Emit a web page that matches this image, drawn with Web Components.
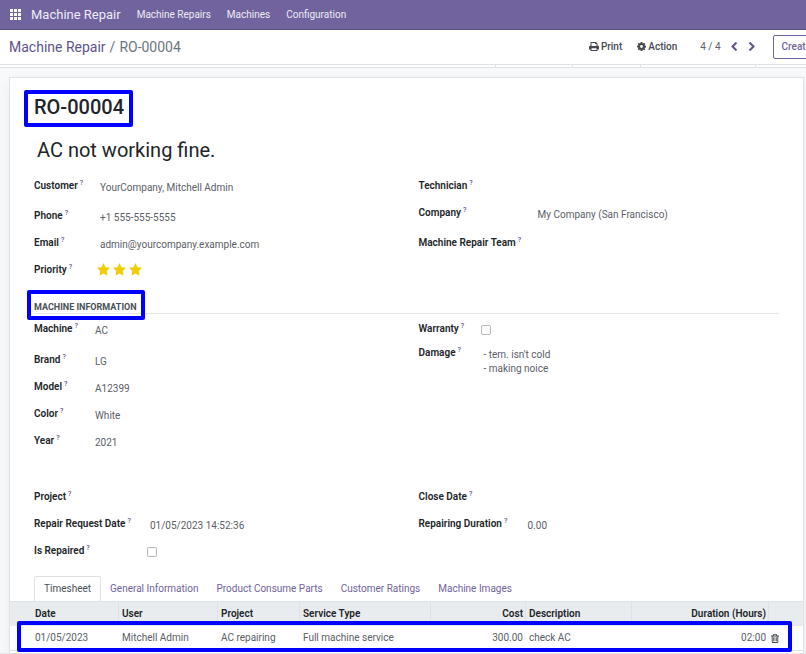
<!DOCTYPE html>
<html lang="en">
<head>
<meta charset="utf-8">
<title>RO-00004 - Machine Repair</title>
<style>
  body { margin: 0; font: 10px/14px Roboto, "Noto Sans", sans-serif; color: #5a6067; background: #f8f9fa; }
</style>
</head>
<body>
<repair-app></repair-app>

<template id="t-app">
  <style>
    :host { display: flex; flex-direction: column; min-height: 100vh; box-sizing: border-box; overflow: hidden; border-bottom: 1px solid #e3e5e8; }
    form-sheet { flex: 1; margin: 9px 2px 0 9px; }
  </style>
  <top-nav></top-nav>
  <control-panel></control-panel>
  <form-sheet></form-sheet>
</template>

<template id="t-nav">
  <style>
    :host { display: block; background: #71639e; border-bottom: 1px solid #5a4f7f; }
    nav { display: flex; align-items: center; height: 29px; padding: 0 10px; gap: 16px; }
    a { color: #eeecf5; text-decoration: none; }
    .home { display: flex; align-items: center; gap: 10px; font-size: 13px; line-height: 20px; }
    svg { display: block; }
  </style>
  <nav>
    <a class="home" href="#"><svg width="11" height="11" viewBox="0 0 11 11" fill="#fff" aria-hidden="true"><path d="M0 0h3v3H0zM4 0h3v3H4zM8 0h3v3H8zM0 4h3v3H0zM4 4h3v3H4zM8 4h3v3H8zM0 8h3v3H0zM4 8h3v3H4zM8 8h3v3H8z"/></svg>Machine Repair</a>
    <a href="#">Machine Repairs</a>
    <a href="#">Machines</a>
    <a href="#">Configuration</a>
  </nav>
</template>

<template id="t-panel">
  <style>
    :host { display: block; background: #fff; }
    .bar { display: flex; align-items: center; height: 34px; padding-left: 9px; border-bottom: 1px solid #dee2e6; overflow: hidden; }
    .crumbs { flex: 1; font-size: 14px; line-height: 20px; display: flex; gap: 4px; color: #6c757d; }
    .crumbs a { color: #5f5389; text-decoration: none; }
    button { font: inherit; background: none; border: 0; padding: 0; color: #43494f; display: flex; align-items: center; gap: 2px; font-weight: 500; }
    svg { display: block; }
    .menus { display: flex; gap: 15px; margin-right: 23px; }
    .menus svg { margin-bottom: 1px; }
    .pager { display: flex; align-items: center; gap: 10px; margin-right: 18px; }
    .pager button { padding-bottom: 2px; }
    .create { color: #71639e; border: 1px solid #71639e; border-radius: 2px; height: 24px; padding: 0 8px; margin-right: -14px; flex: none; }
    .strip { display: flex; justify-content: flex-end; height: 2px; border-bottom: 1px solid #dee2e6; }
    .strip i { border-left: 1px solid #dee2e6; box-sizing: border-box; }
  </style>
  <div class="bar">
    <div class="crumbs"><a href="#">Machine Repair</a><span>/</span><span>RO-00004</span></div>
    <div class="menus">
      <button type="button"><svg width="10" height="9" viewBox="0 0 20 18" aria-hidden="true"><path fill="#43494f" fill-rule="evenodd" d="M4 0h10l3 3v4q3 0 3 3v5h-3v3H3v-3H0v-5q0-3 3-3V0zM5 2v6h10V4h-3V2zM5 12.500V16h10v-3.500z"/></svg>Print</button>
      <button type="button"><svg width="9" height="9" viewBox="0 0 18 18" aria-hidden="true"><path fill="#43494f" fill-rule="evenodd" d="M7.300 0h3.400l.5 2.500 1 .4L14.400 1.500l2.300 2.300-1.500 2.100.5 1.100 2.300.4v3.400l-2.400.5-.4 1 1.500 2.100-2.300 2.300-2.100-1.500-1.100.5-.4 2.300H7.300l-.5-2.400-1-.4-2.200 1.500-2.300-2.300 1.500-2.100-.5-1.100L0 10.700V7.300l2.400-.5.4-1L1.300 3.700l2.300-2.300 2.100 1.500 1.100-.5zM9 6.200a2.800 2.800 0 1 0 0 5.600A2.800 2.800 0 1 0 9 6.200z"/></svg>Action</button>
    </div>
    <div class="pager">
      <span>4 / 4</span>
      <button type="button" aria-label="Previous"><svg width="7" height="9" viewBox="0 0 7 9" fill="none" stroke="#5f5389" stroke-width="2" aria-hidden="true"><path d="M5.500 .5 1.500 4.500 5.500 8.500"/></svg></button>
      <button type="button" aria-label="Next"><svg width="7" height="9" viewBox="0 0 7 9" fill="none" stroke="#5f5389" stroke-width="2" aria-hidden="true"><path d="M1.500 .5 5.500 4.500 1.500 8.500"/></svg></button>
    </div>
    <button class="create" type="button">Create</button>
  </div>
  <div class="strip"><i style="width:77px"></i><i style="width:68px"></i><i style="width:115px"></i><i style="width:51px"></i></div>
</template>

<template id="t-field">
  <style>
    :host { display: flex; min-height: 27px; }
    :host([tall]) { min-height: 30px; }
    label, .label { flex: none; width: var(--label-width, 66px); color: #212529; font-weight: 600; white-space: nowrap; }
    sup { font-size: 7px; line-height: 7px; font-weight: 500; color: #5f5389; margin-left: 2px; vertical-align: 4px; }
    .value { padding-top: 2px; min-width: 0; }
    input { appearance: none; display: block; width: 10px; height: 10px; margin: 3px 0 0 -3px; border: 1px solid #b5b8bc; border-radius: 2px; background: #fff; }
  </style>
</template>

<template id="t-stars">
  <style>
    :host { display: flex; gap: 3px; margin: -2px 0 0 -3px; }
    svg { display: block; }
  </style>
</template>

<template id="t-mark">
  <style>
    :host { display: block; box-sizing: border-box; border: 4px solid #00f; border-radius: 2px; }
  </style>
  <slot></slot>
</template>

<template id="t-sheet">
  <style>
    :host { display: block; box-sizing: border-box; background: #fff; border: 1px solid #dee2e6; border-bottom: 0; box-shadow: 0 4px 12px #0000000f; }
    .body { padding: 12px 24px 0; }
    h1, h2, h3 { margin: 0; }
    .title { width: fit-content; margin-left: -10px; padding: 1px 5px 4px 6px; }
    h1 { font-size: 20px; line-height: 24px; font-weight: 500; color: #212529; }
    h2 { font-size: 20px; line-height: 28px; font-weight: 400; color: #212529; margin: 9px 3px 15px; }
    .group { display: grid; grid-template-columns: 1fr 1fr; column-gap: 24px; }
    h3 { position: relative; margin: 10px 0 8px; padding-top: 1px; font-size: 9px; line-height: 12px; font-weight: 700; color: #495057; border-bottom: 1px solid #e5e7ea; }
    .over { position: absolute; left: -7px; top: -10px; width: 118px; height: 30px; }
    .machine { margin-bottom: 29px; }
    .a { --label-width: 66px; } .b { --label-width: 119px; }
    .c { --label-width: 61px; } .d { --label-width: 65px; }
    .e { --label-width: 116px; } .f { --label-width: 109px; }
    .c form-field[tall] { min-height: 31px; }
    .d form-field { min-height: 24px; }
    note-book { margin-top: 5px; }
  </style>
  <div class="body">
    <mark-box class="title"><h1>RO-00004</h1></mark-box>
    <h2>AC not working fine.</h2>
    <div class="group">
      <div class="a">
        <form-field label="Customer" tall>YourCompany, Mitchell Admin</form-field>
        <form-field label="Phone">+1 555-555-5555</form-field>
        <form-field label="Email">admin@yourcompany.example.com</form-field>
        <form-field label="Priority"><star-rating count="3"></star-rating></form-field>
      </div>
      <div class="b">
        <form-field label="Technician"></form-field>
        <form-field label="Company" tall>My Company (San Francisco)</form-field>
        <form-field label="Machine Repair Team"></form-field>
      </div>
    </div>
    <h3>MACHINE INFORMATION<mark-box class="over"></mark-box></h3>
    <div class="group machine">
      <div class="c">
        <form-field label="Machine" tall>AC</form-field>
        <form-field label="Brand">LG</form-field>
        <form-field label="Model">A12399</form-field>
        <form-field label="Color">White</form-field>
        <form-field label="Year">2021</form-field>
      </div>
      <div class="d">
        <form-field label="Warranty" type="check"></form-field>
        <form-field label="Damage">- tem. isn't cold<br>- making noice</form-field>
      </div>
    </div>
    <div class="group">
      <div class="e">
        <form-field label="Project"></form-field>
        <form-field label="Repair Request Date">01/05/2023 14:52:36</form-field>
        <form-field label="Is Repaired" type="check"></form-field>
      </div>
      <div class="f">
        <form-field label="Close Date"></form-field>
        <form-field label="Repairing Duration">0.00</form-field>
      </div>
    </div>
  </div>
  <note-book></note-book>
</template>

<template id="t-book">
  <style>
    :host { display: block; }
    .tabs { display: flex; padding: 0 24px; }
    .tabs button { font: inherit; height: 25px; padding: 0 8px; border: 1px solid transparent; border-bottom: 0; border-radius: 2px 2px 0 0; background: none; color: #71639e; }
    .tabs button[aria-selected=true] { padding: 0 9px; color: #495057; border-color: #dee2e6; }
    .wrap { position: relative; }
    table { width: 100%; table-layout: fixed; border-collapse: separate; border-spacing: 0; border-top: 1px solid #dee2e6; }
    th, td { padding: 0 3px; height: 24px; text-align: left; white-space: nowrap; box-sizing: border-box; }
    th { background: #e9ecef; color: #212529; font-weight: 600; border-left: 1px solid #dee2e6; }
    th:first-child { border-left-color: #e9ecef; }
    td { border-bottom: 1px solid #dee2e6; border-left: 1px solid transparent; }
    th:first-child, td:first-child { padding-left: 24px; }
    td { height: 25px; }
    td:last-child { padding: 0 2px; }
    .n { text-align: right; padding-right: 2px; }
    td button { display: block; padding: 0; border: 0; background: none; }
    svg { display: block; }
    .over { position: absolute; left: 7px; right: 11px; bottom: -1px; height: 31px; pointer-events: none; }
  </style>
  <div class="tabs" role="tablist">
    <button role="tab" aria-selected="true">Timesheet</button>
    <button role="tab">General Information</button>
    <button role="tab">Product Consume Parts</button>
    <button role="tab">Customer Ratings</button>
    <button role="tab">Machine Images</button>
  </div>
  <div class="wrap">
    <table>
      <colgroup><col style="width:108px"><col style="width:99px"><col style="width:82px"><col style="width:131px"><col style="width:95px"><col style="width:106px"><col style="width:137px"><col></colgroup>
      <thead><tr><th>Date</th><th>User</th><th>Project</th><th>Service Type</th><th class="n">Cost</th><th>Description</th><th class="n">Duration (Hours)</th><th></th></tr></thead>
      <tbody><tr><td>01/05/2023</td><td>Mitchell Admin</td><td>AC repairing</td><td>Full machine service</td><td class="n">300.00</td><td>check AC</td><td class="n">02:00</td>
      <td><button type="button" aria-label="Delete row"><svg width="8" height="9" viewBox="0 0 16 18" aria-hidden="true"><path fill="#43494f" fill-rule="evenodd" d="M5 0h6l1.500 3H16v2h-1.500v11q0 2-2 2h-9q-2 0-2-2V5H0V3h3.500zM6 1.500 5.500 3h5L10 1.500zM3.300 5v11h9.400V5zM4.500 6.500h1.500v8H4.500zM7.200 6.500h1.600v8H7.200zM10 6.500h1.500v8H10z"/></svg></button></td></tr></tbody>
    </table>
    <mark-box class="over"></mark-box>
  </div>
</template>

<script>
  const define = (name, template, init) => customElements.define(name, class extends HTMLElement {
    constructor() {
      super();
      const root = this.attachShadow({ mode: 'open' });
      root.append(document.getElementById(template).content.cloneNode(true));
    }
    connectedCallback() {
      if (init && !this.ready) { this.ready = true; init(this, this.shadowRoot); }
    }
  });

  define('mark-box', 't-mark');
  define('star-rating', 't-stars', (el, root) => {
    const star = '<svg width="13" height="13" viewBox="0 0 24 24" fill="#f3cc00" aria-hidden="true"><path d="M12 0l3.700 7.700 8.300 1.200-6 6 1.400 8.600L12 19.500l-7.400 4L6 14.900l-6-6 8.300-1.200z"/></svg>';
    root.append(document.createRange().createContextualFragment(star.repeat(+el.getAttribute('count'))));
  });
  define('form-field', 't-field', (el, root) => {
    const check = el.getAttribute('type') === 'check';
    const tag = check ? 'label' : 'div';
    const html = `<${tag} class="label"${check ? ' for="box"' : ''}>${el.getAttribute('label')}<sup>?</sup></${tag}>`
      + (check ? '<input id="box" type="checkbox">' : '<div class="value"><slot></slot></div>');
    root.append(document.createRange().createContextualFragment(html));
  });
  define('note-book', 't-book');
  define('form-sheet', 't-sheet');
  define('top-nav', 't-nav');
  define('control-panel', 't-panel');
  define('repair-app', 't-app');
</script>
</body>
</html>
